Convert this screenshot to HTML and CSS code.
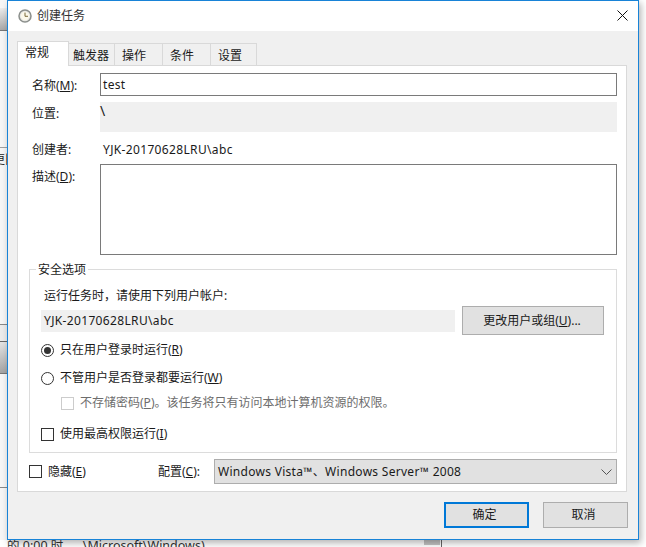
FILE: index.html
```html
<!DOCTYPE html>
<html lang="zh-CN">
<head>
<meta charset="utf-8">
<title>创建任务</title>
<link rel="stylesheet" href="styles.css">
</head>
<body>
<div class="desktop">
  <div class="behind-left">
    <div class="strip strip-a"></div>
    <div class="strip strip-b"></div>
    <div class="strip strip-c"></div>
    <div class="strip strip-d"></div>
    <div class="strip strip-e"></div>
  </div>
  <div class="behind-side-text">更旧</div>
  <div class="behind-text">的 0:00 时 &nbsp; &nbsp; &nbsp;\Microsoft\Windows)</div>
  <div class="behind-block"></div>
  <div class="behind-line"></div>
  <div class="dialog">
    <header class="titlebar">
      <svg class="clock" width="14" height="14" viewBox="0 0 14 14"><circle cx="7" cy="7" r="6" fill="#e8e8e4" stroke="#8b8f8c" stroke-width="1.5"/><circle cx="7" cy="7" r="4.2" fill="#fbf8ea"/><path d="M7 3.6V7.3H10" fill="none" stroke="#7a6a3a" stroke-width="1"/></svg>
      <span class="title">创建任务</span>
      <svg class="close" width="11" height="11" viewBox="0 0 11 11"><path d="M.5 .5L10.5 10.5M10.5 .5L.5 10.5" stroke="#111" stroke-width="1" fill="none"/></svg>
    </header>
    <div class="body">
      <nav class="tabs">
        <div class="tab tab-active">常规</div>
        <div class="tab tab-trigger">触发器</div>
        <div class="tab tab-2">操作</div>
        <div class="tab tab-2">条件</div>
        <div class="tab tab-1">设置</div>
      </nav>
      <section class="panel">
        <div class="row row-name">
          <label class="label">名称(<u>M</u>):</label>
          <div class="input">test</div>
        </div>
        <div class="row row-location">
          <label class="label">位置:</label>
          <div class="readonly">\</div>
        </div>
        <div class="row row-author">
          <label class="label">创建者:</label>
          <div class="value">YJK-20170628LRU\abc</div>
        </div>
        <div class="row row-desc">
          <label class="label">描述(<u>D</u>):</label>
          <div class="textarea"></div>
        </div>
        <fieldset class="group">
          <legend class="legend">安全选项</legend>
          <div class="run-as">运行任务时，请使用下列用户帐户:</div>
          <div class="account-row">
            <div class="account">YJK-20170628LRU\abc</div>
            <button class="btn btn-change">更改用户或组(<u>U</u>)...</button>
          </div>
          <div class="option opt-1"><span class="radio radio-on"></span><span>只在用户登录时运行(<u>R</u>)</span></div>
          <div class="option opt-2"><span class="radio"></span><span>不管用户是否登录都要运行(<u>W</u>)</span></div>
          <div class="option opt-3 disabled"><span class="check check-off"></span><span>不存储密码(<u>P</u>)。该任务将只有访问本地计算机资源的权限。</span></div>
          <div class="option opt-4"><span class="check"></span><span>使用最高权限运行(<u>I</u>)</span></div>
        </fieldset>
        <div class="bottom-row">
          <div class="option hidden-opt"><span class="check"></span><span>隐藏(<u>E</u>)</span></div>
          <label class="config-label">配置(<u>C</u>):</label>
          <div class="select">
            <span class="select-text">Windows Vista™、Windows Server™ 2008</span>
            <svg width="11" height="6" viewBox="0 0 11 6"><path d="M.5 .5L5.5 5.5L10.5 .5" fill="none" stroke="#555" stroke-width="1"/></svg>
          </div>
        </div>
      </section>
      <footer class="actions">
        <button class="btn btn-foot btn-ok">确定</button>
        <button class="btn btn-foot">取消</button>
      </footer>
    </div>
  </div>
</div>
</body>
</html>
```
FILE: styles.css
```css
* { box-sizing: border-box; }
html, body { margin: 0; padding: 0; }
body {
  width: 646px; height: 547px; overflow: hidden; background: #fff;
  font-family: "Noto Sans", "Noto Sans CJK SC", sans-serif;
  font-size: 12px; color: #1a1a1a; line-height: 16px;
}
u { text-underline-offset: 1px; }
.desktop { position: relative; width: 646px; height: 547px; overflow: hidden; }
.behind-left { position: absolute; left: 0; top: 0; width: 7px; height: 540px; background: #f6f6f6; }
.strip { position: absolute; left: 0; width: 7px; }
.strip-a { top: 8px; height: 23px; background: linear-gradient(#ececec, #a8a8a8); border-bottom: 1px solid #777; }
.strip-b { top: 147px; height: 1px; background: #a0a0a0; }
.strip-c { top: 324px; height: 18px; background: #ececec; border-top: 1px solid #888; border-bottom: 1px solid #666; }
.strip-d { top: 342px; height: 32px; background: linear-gradient(#e4e4e4, #a4a4a4); border-bottom: 1px solid #777; }
.strip-e { top: 487px; height: 1px; background: #888; }
.behind-side-text { position: absolute; left: -7px; top: 152px; width: 24px; color: #222; }
.behind-text { position: absolute; left: 7px; top: 537px; font-size: 12.5px; line-height: 18px; white-space: pre; color: #333; }
.behind-block { position: absolute; left: 424px; top: 540px; width: 16px; height: 5px; background: #c4c4c4; }
.behind-line { position: absolute; left: 441px; top: 540px; width: 1px; height: 7px; background: #666; }
.dialog {
  position: absolute; left: 7px; top: 0; width: 632px; height: 540px;
  border: 1px solid #1883d7; background: #f0f0f0;
  display: flex; flex-direction: column;
  box-shadow: 2px 3px 7px rgba(0,0,0,.3);
}
.titlebar { height: 30px; flex: none; background: #fff; display: flex; align-items: center; padding: 0 10px 0 10px; }
.clock { flex: none; margin-right: 5px; }
.title { flex: 1; color: #333; }
.close { flex: none; margin-bottom: 1px; }
.body { flex: 1; padding: 10px 11px 0 9px; display: flex; flex-direction: column; }
.tabs { display: flex; height: 24px; align-items: flex-end; }
.tab { height: 22px; border: 1px solid #d9d9d9; border-left: 0; border-bottom: 0; background: #f0f0f0; line-height: 23px; padding-left: 7px; }
.tab-active { width: 52px; height: 25px; background: #fff; border-left: 1px solid #d9d9d9; line-height: 22px; margin-bottom: -1px; position: relative; z-index: 1; }
.tab-trigger { width: 46px; padding-left: 4px; }
.tab-1 { width: 46px; }
.tab-2 { width: 48px; }
.panel { height: 427px; background: #fff; border: 1px solid #d9d9d9; padding: 7px 9px 0 11px; display: flex; flex-direction: column; }
.row { display: flex; }
.label { width: 71px; flex: none; padding-left: 3px; }
.row-name { height: 23px; align-items: center; }
.row-name .label { padding-top: 2px; }
.input { flex: 1; height: 23px; border: 1px solid #7a7a7a; padding-left: 2px; line-height: 21px; letter-spacing: .3px; }
.row-location { margin-top: 6px; height: 30px; }
.row-location .label { padding-top: 4px; }
.readonly { flex: 1; background: #f0f0f0; line-height: 18px; font-size: 14px; }
.row-author { margin-top: 9px; height: 16px; }
.row-author .label, .value { padding-top: 1px; }
.value { padding-left: 3px; letter-spacing: .35px; }
.row-desc { margin-top: 7px; height: 91px; }
.row-desc .label { padding-top: 5px; }
.textarea { flex: 1; border: 1px solid #7a7a7a; background: #fff; }
.group { margin: 6px 0 0; padding: 0 0 0 11px; height: 192px; border: 1px solid #dcdcdc; display: block; position: relative; min-width: 0; }
.legend { padding: 1px 2px 0; margin-left: -5px; line-height: 15px; }
.run-as { margin-top: 11px; height: 16px; padding-left: 3px; }
.account-row { display: flex; align-items: center; margin-top: 2px; height: 29px; }
.account { width: 414px; height: 22px; background: #f0f0f0; line-height: 22px; padding-left: 3px; letter-spacing: .35px; }
.btn { font: inherit; color: #1a1a1a; background: #e1e1e1; border: 1px solid #adadad; padding: 0; cursor: default; }
.btn-change { width: 142px; height: 29px; margin-left: 7px; padding-right: 2px; }
.option { display: flex; align-items: center; height: 16px; }
.opt-1 { margin-top: 7px; }
.opt-2 { margin-top: 12px; }
.opt-3 { margin-top: 9px; padding-left: 20px; }
.opt-4 { margin-top: 15px; }
.disabled { color: #6d6d6d; }
.radio { width: 13px; height: 13px; border-radius: 50%; border: 1px solid #333; margin-right: 6px; flex: none; position: relative; background: #fff; }
.radio-on { display: flex; align-items: center; justify-content: center; }
.radio-on::after { content: ""; width: 7px; height: 7px; border-radius: 50%; background: #333; }
.check { width: 13px; height: 13px; border: 1px solid #333; margin-right: 6px; flex: none; background: #fff; }
.check-off { border-color: #ccc; }
.bottom-row { display: flex; align-items: center; margin-top: 6px; height: 25px; }
.hidden-opt { width: 129px; }
.config-label { width: 56px; }
.select { flex: 1; height: 25px; background: #e1e1e1; border: 1px solid #adadad; display: flex; align-items: center; justify-content: space-between; padding: 0 4px 0 3px; }
.select-text { letter-spacing: .29px; }
.actions { display: flex; justify-content: flex-end; gap: 14px; margin: 10px -1px 0 0; }
.btn-foot { width: 85px; height: 26px; padding-right: 4px; }
.btn-ok { border: 2px solid #0078d7; }
```
